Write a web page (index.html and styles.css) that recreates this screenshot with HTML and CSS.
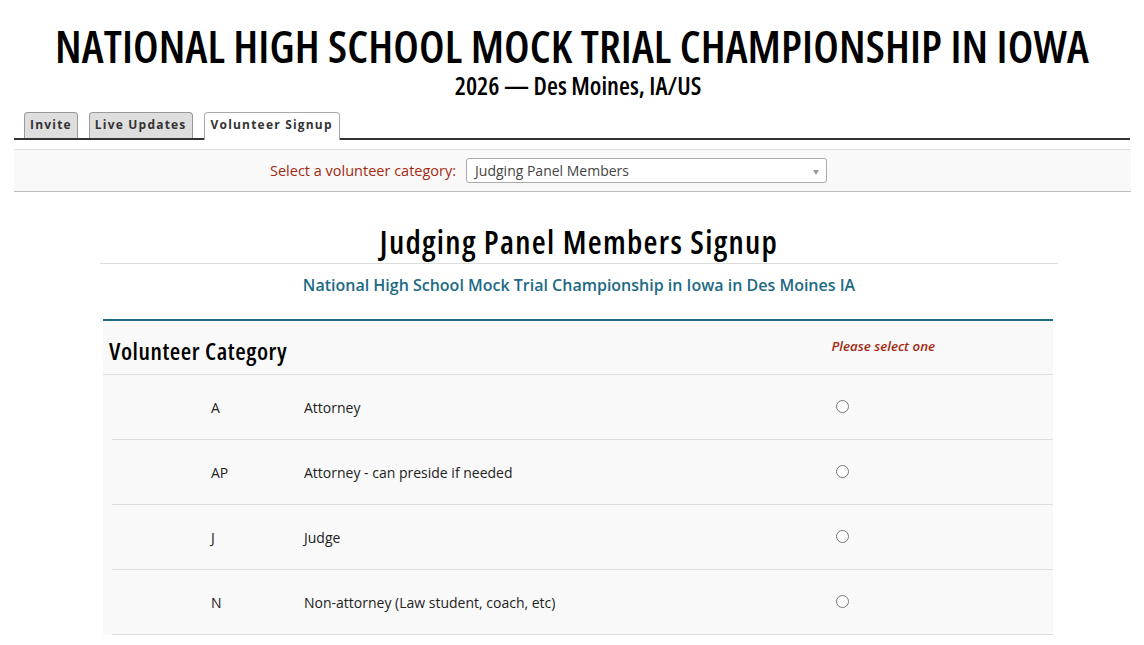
FILE: index.html
```html
<!DOCTYPE html>
<html lang="en">
<head>
    <meta charset="UTF-8">
    <meta name="viewport" content="width=device-width, initial-scale=1.0">
    <title>Volunteer Signup</title>
    <link rel="stylesheet" href="styles.css">
</head>
<body>
    <div class="header">
        <h1>NATIONAL HIGH SCHOOL MOCK TRIAL CHAMPIONSHIP IN IOWA</h1>
        <h2>2026 &mdash; Des Moines, IA/US</h2>
    </div>

    <div class="tabs">
        <a class="tab">Invite</a>
        <a class="tab">Live Updates</a>
        <a class="tab active">Volunteer Signup</a>
    </div>

    <div class="picker">
        <label for="category">Select a volunteer category:</label>
        <div class="select" id="category">
            <span>Judging Panel Members</span>
            <span class="arrow"></span>
        </div>
    </div>

    <div class="signup">
        <h3>Judging Panel Members Signup</h3>
        <p class="event">National High School Mock Trial Championship in Iowa in Des Moines IA</p>

        <div class="category">
            <div class="category-head">
                <h4>Volunteer Category</h4>
                <span class="required">Please select one</span>
            </div>
            <div class="row">
                <span class="code">A</span>
                <span class="desc">Attorney</span>
                <span class="radio"><input type="radio" name="cat" value="A"></span>
            </div>
            <div class="row">
                <span class="code">AP</span>
                <span class="desc">Attorney - can preside if needed</span>
                <span class="radio"><input type="radio" name="cat" value="AP"></span>
            </div>
            <div class="row">
                <span class="code">J</span>
                <span class="desc">Judge</span>
                <span class="radio"><input type="radio" name="cat" value="J"></span>
            </div>
            <div class="row">
                <span class="code">N</span>
                <span class="desc">Non-attorney (Law student, coach, etc)</span>
                <span class="radio"><input type="radio" name="cat" value="N"></span>
            </div>
        </div>
    </div>
</body>
</html>
```

FILE: styles.css
```css
body {
    font-family: "Open Sans", "Liberation Sans", sans-serif;
    background: #fff;
    color: #222;
    margin: 0;
    padding: 0;
}
h1, h2, h3, h4 {
    font-family: "Open Sans", "Liberation Sans", sans-serif;
    font-stretch: 75%;
    font-weight: 600;
    color: #000;
    white-space: nowrap;
}
.header {
    text-align: center;
    padding-top: 23px;
}
.header h1 {
    font-size: 45px;
    line-height: 46px;
    letter-spacing: 0.12px;
    margin: 0 0 2px;
}
.header h2 {
    font-size: 25px;
    line-height: 28px;
    margin: 0;
    padding-left: 12px;
}
.tabs {
    display: flex;
    align-items: flex-start;
    gap: 11px;
    margin: 13px 14px 0;
    padding-left: 10px;
    border-bottom: 2px solid #333;
    height: 26px;
}
.tab {
    display: block;
    height: 26px;
    box-sizing: border-box;
    padding: 0 5px;
    line-height: 24px;
    font-size: 12px;
    font-weight: bold;
    letter-spacing: 1.2px;
    color: #333;
    background: #dedede;
    border: 1px solid #999;
    border-bottom: none;
    border-radius: 4px 4px 0 0;
}
.tab.active {
    position: relative;
    background: #fff;
    border-color: #aaa;
    height: 28px;
    padding: 0 6px;
}
.picker {
    display: flex;
    align-items: center;
    gap: 10px;
    margin: 9px 13px 0 14px;
    padding: 0 0 1px 256px;
    height: 40px;
    background: #f9f9f9;
    border-top: 1px solid #ddd;
    border-bottom: 1px solid #bbb;
}
.picker label {
    color: #a32a12;
    font-size: 14.5px;
}
.select {
    display: flex;
    align-items: center;
    justify-content: space-between;
    width: 344px;
    height: 23px;
    padding: 0 7px 0 8px;
    background: #fff;
    border: 1px solid #aaa;
    border-radius: 3px;
    font-size: 14px;
    color: #444;
}
.arrow {
    width: 0;
    height: 0;
    border-left: 3.5px solid transparent;
    border-right: 3.5px solid transparent;
    border-top: 5px solid #999;
    margin-top: 4px;
}
.signup {
    width: 958px;
    margin: 0 0 0 100px;
}
.signup h3 {
    font-size: 32px;
    letter-spacing: 1.3px;
    text-align: center;
    margin: 28px 0 0;
    line-height: 42px;
    padding: 1px 0 0;
    border-bottom: 1px solid #ddd;
}
.event {
    text-align: center;
    color: #1d6a85;
    font-size: 16px;
    font-weight: 600;
    line-height: 22px;
    margin: 10px 0 0;
}
.category {
    margin: 23px 5px 0 3px;
    background: #f9f9f9;
    border-top: 2px solid #1f6b85;
}
.category-head {
    display: flex;
    align-items: center;
    justify-content: space-between;
    height: 53px;
    padding: 0 118px 0 6px;
    border-bottom: 1px solid #ddd;
}
.category-head h4 {
    font-size: 24px;
    letter-spacing: 0.55px;
    margin: 6px 0 0;
}
.required {
    color: #a32a12;
    font-style: italic;
    font-weight: 600;
    font-size: 13.3px;
    margin-top: -4px;
}
.row {
    display: grid;
    grid-template-columns: 192px 532px 16px;
    align-items: center;
    height: 64px;
    margin-left: 9px;
    border-bottom: 1px solid #ddd;
    font-size: 14px;
    color: #222;
}
.code {
    padding-left: 99px;
}
.radio input {
    margin: 0;
    width: 13px;
    height: 13px;
}
```
